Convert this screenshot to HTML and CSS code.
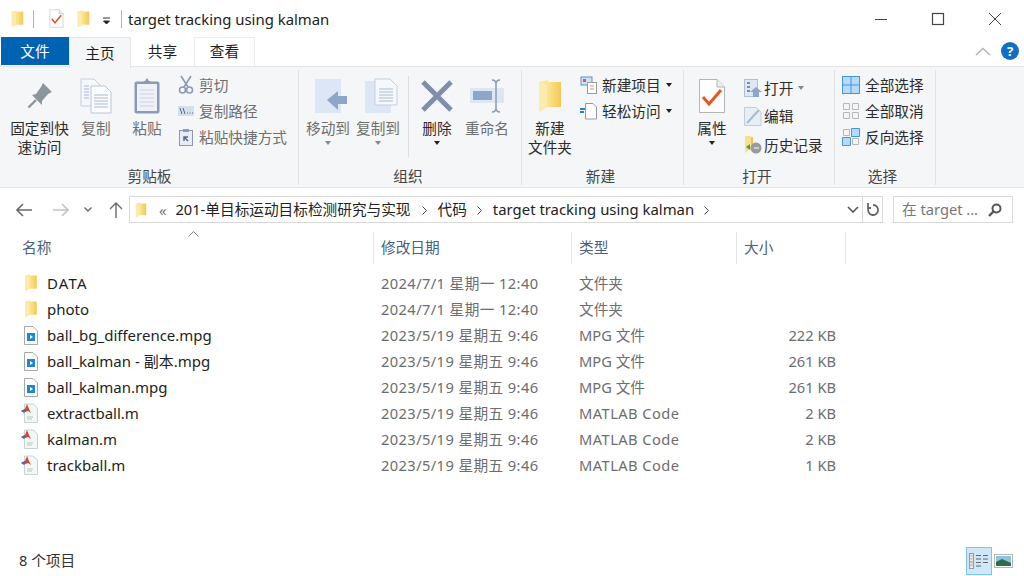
FILE: index.html
```html
<!DOCTYPE html>
<html lang="zh-CN">
<head>
    <meta charset="UTF-8">
    <title>target tracking using kalman</title>
    <link rel="stylesheet" href="styles.css">
</head>
<body>
    <!-- shared icons -->
    <svg class="defs" width="0" height="0">
        <defs>
            <linearGradient id="fold" x1="0" x2="1" y1="0" y2="0">
                <stop offset="0" stop-color="#fbe9a6"/>
                <stop offset="0.45" stop-color="#fbe28c"/>
                <stop offset="1" stop-color="#f4c954"/>
            </linearGradient>
            <symbol id="folder" viewBox="0 0 24 34">
                <path d="M1 3 L10 1 L10 3 L23 3 L23 28 L9 28 L1 33 Z" fill="url(#fold)"/>
                <path d="M1 3 L9 6 L9 28 L1 33 Z" fill="#fcebac"/>
            </symbol>
            <symbol id="props" viewBox="0 0 28 36">
                <path d="M1.5 1.5 H19 L26.5 9 V34.5 H1.5 Z" fill="#fff" stroke="#b4b4b4"/>
                <path d="M19 1.5 V9 H26.5" fill="#eee" stroke="#b4b4b4"/>
                <path d="M5 19 L11 26 L23 12" fill="none" stroke="#e8551f" stroke-width="3"/>
            </symbol>
            <symbol id="pages" viewBox="0 0 32 36">
                <path d="M1 1 H14 L20 7 V28 H1 Z" fill="#f4f7fb" stroke="#c5d0e0"/>
                <path d="M11 8 H25 L31 14 V35 H11 Z" fill="#fbfcfe" stroke="#b9c6da"/>
                <path d="M14 17 H28 M14 20 H28 M14 23 H28 M14 26 H28 M14 29 H28 M4 8 H9 M4 11 H9 M4 14 H9 M4 17 H9 M4 20 H9" stroke="#a9bad3"/>
            </symbol>
            <symbol id="media" viewBox="0 0 14 19">
                <path d="M.5 .5 H9 L13.5 5 V18.5 H.5 Z" fill="#fdfdfd" stroke="#a9a9a9"/>
                <rect x="3" y="7" width="8" height="8" fill="#1f87d0"/>
                <path d="M6 9 L9 11 L6 13 Z" fill="#fff"/>
            </symbol>
            <symbol id="mfile" viewBox="0 0 18 20">
                <path d="M3.5 1 H12 L16.5 5 V19.5 H3.5 Z" fill="#f2f7f7" stroke="#c6d3d8"/>
                <path d="M6 14 H12 M6 16 H11" stroke="#b7c9b7"/>
                <path d="M0 8 L4 6 L6 1 L8 6 L10 10 L7 8 L4 9 Z" fill="#d8452a"/>
                <path d="M0 8 L4 6 L5 8 L3 10 Z" fill="#3d6fb5"/>
            </symbol>
        </defs>
    </svg>

    <header class="titlebar">
        <svg class="qa-folder" width="13" height="18"><use href="#folder"/></svg>
        <span class="qa-sep"></span>
        <svg class="qa-props" width="15" height="19"><use href="#props"/></svg>
        <svg class="qa-folder2" width="13" height="18"><use href="#folder"/></svg>
        <svg class="qa-caret" width="9" height="8" viewBox="0 0 9 8"><path d="M1 1 H8 M1.5 4 H7.5 L4.5 7 Z" stroke="#333" fill="#111"/></svg>
        <span class="qa-sep"></span>
        <span class="title">target tracking using kalman</span>
        <div class="win-btns">
            <svg width="14" height="14" viewBox="0 0 14 14"><path d="M1 7.5 H13" stroke="#444"/></svg>
            <svg width="14" height="14" viewBox="0 0 14 14"><rect x="1.5" y="1.5" width="11" height="11" fill="none" stroke="#444" stroke-width="1.2"/></svg>
            <svg width="14" height="14" viewBox="0 0 14 14"><path d="M1 1 L13 13 M13 1 L1 13" stroke="#444" stroke-width="1"/></svg>
        </div>
    </header>

    <nav class="tabs">
        <div class="tab tab-file">文件</div>
        <div class="tab tab-active">主页</div>
        <div class="tab tab-plain">共享</div>
        <div class="tab tab-view">查看</div>
        <div class="tabs-right">
            <svg width="16" height="9" viewBox="0 0 16 9"><path d="M1 8 L8 1.5 L15 8" fill="none" stroke="#b5b5b5" stroke-width="1.5"/></svg>
            <span class="help">?</span>
        </div>
    </nav>

    <section class="ribbon">
        <div class="group group-clip">
            <div class="group-body">
                <div class="big w59">
                    <svg class="big-icon" width="38" height="38" viewBox="0 0 38 38"><path d="M22 6 L31 15 L27 17 L21 24 L21 28 L11 18 L15 17 L20 10 Z" fill="#8b959c"/><path d="M15 23 L7.500 30.500" stroke="#8b959c" stroke-width="2.400"/></svg>
                    <span>固定到快<br>速访问</span>
                </div>
                <div class="big w54 dim">
                    <svg class="big-icon" width="32" height="36"><use href="#pages"/></svg>
                    <span>复制</span>
                </div>
                <div class="big w48 dim">
                    <svg class="big-icon" width="28" height="38" viewBox="0 0 28 38"><rect x="1.5" y="4.5" width="25" height="32" rx="2" fill="#8b9bb6"/><rect x="4" y="7" width="20" height="27" fill="#eef2f8"/><path d="M7 13 H21 M7 17 H21 M7 21 H21 M7 25 H21 M7 29 H21" stroke="#cad4e4"/><path d="M9 7 L11 4 H12 L14 1 L16 4 H17 L19 7 Z" fill="#8b9bb6"/></svg>
                    <span>粘贴</span>
                </div>
                <div class="small-list clip-list dim">
                    <div class="small">
                        <svg width="16" height="20" viewBox="0 0 16 20"><path d="M3 1 L10 12 M13 1 L6 12" stroke="#8a9ab5" stroke-width="1.6"/><circle cx="4.5" cy="15" r="3" fill="none" stroke="#8a9ab5" stroke-width="1.6"/><circle cx="11.5" cy="15" r="3" fill="none" stroke="#8a9ab5" stroke-width="1.6"/></svg>
                        <span>剪切</span>
                    </div>
                    <div class="small">
                        <svg width="16" height="12" viewBox="0 0 16 12"><rect width="16" height="10" y="1" fill="#d5dfee"/><path d="M2 3 L4 9 M5 3 L7 9 M9 8 H10 M11.500 8 H12.500 M14 8 H15" stroke="#56688a"/></svg>
                        <span>复制路径</span>
                    </div>
                    <div class="small">
                        <svg width="14" height="18" viewBox="0 0 14 18"><rect x=".5" y="2.500" width="13" height="15" fill="#e6ecf5" stroke="#8a9ab5"/><rect x="4" y="1" width="6" height="3" fill="#8a9ab5"/><path d="M5 13 V9 H9 M5 9 L9 13" stroke="#56688a" stroke-width="1.500" fill="none"/></svg>
                        <span>粘贴快捷方式</span>
                    </div>
                </div>
            </div>
            <div class="group-name">剪贴板</div>
        </div>

        <div class="group group-org">
            <div class="group-body">
                <div class="big w52 dim">
                    <svg class="big-icon nudge" width="34" height="36" viewBox="0 0 34 36"><rect x="1" y="1" width="26" height="34" fill="#dce6f4"/><path d="M13 22 L24 13 V18 H33 V26 H24 V32 Z" fill="#8ea6c8"/></svg>
                    <span>移动到</span><i class="caret"></i>
                </div>
                <div class="big w48 dim">
                    <svg class="big-icon nudge" width="34" height="36" viewBox="0 0 34 36"><rect x="1" y="3" width="26" height="32" fill="#dce6f4"/><path d="M11 1 H26 L33 8 V27 H11 Z" fill="#f5f8fc" stroke="#c3cfe0"/><path d="M15 11 H29 M15 14 H29 M15 17 H29 M15 20 H29 M15 23 H29" stroke="#a9bad3"/></svg>
                    <span>复制到</span><i class="caret"></i>
                </div>
                <span class="vsep"></span>
                <div class="big w56">
                    <svg class="big-icon" width="34" height="36" viewBox="0 0 34 36"><path d="M3 4 L31 32 M31 4 L3 32" stroke="#7f8fab" stroke-width="5"/></svg>
                    <span>删除</span><i class="caret dark"></i>
                </div>
                <div class="big w44 dim">
                    <svg class="big-icon" width="36" height="36" viewBox="0 0 36 36"><rect x="1" y="10" width="34" height="15" fill="#dce6f4"/><rect x="4" y="13" width="19" height="9" fill="#8ea6c8"/><path d="M23 2 Q27 2 27 6 V30 Q27 34 31 34 M31 2 Q27 2 27 6 M27 30 Q27 34 23 34" fill="none" stroke="#8a9ab5" stroke-width="1.500"/></svg>
                    <span>重命名</span>
                </div>
            </div>
            <div class="group-name">组织</div>
        </div>

        <div class="group group-new">
            <div class="group-body">
                <div class="big w56">
                    <svg class="big-icon" width="24" height="36"><use href="#folder"/></svg>
                    <span>新建<br>文件夹</span>
                </div>
                <div class="small-list new-list">
                    <div class="small">
                        <svg width="18" height="18" viewBox="0 0 18 18"><rect x="1" y="1" width="11" height="8" fill="#cfe3f7" stroke="#5f8fc2"/><path d="M3 3 H6 V6 H3 Z" fill="#e8553a"/><rect x="7.500" y="6.500" width="9" height="11" fill="#fff" stroke="#9a9a9a"/><path d="M10 10 H14 M10 13 H14" stroke="#e38a80"/></svg>
                        <span>新建项目</span><i class="caret dark inline"></i>
                    </div>
                    <div class="small">
                        <svg width="18" height="18" viewBox="0 0 18 18"><path d="M5.500 1.500 H13 L16.500 5 V17 H5.500 Z" fill="#fff" stroke="#9a9a9a"/><path d="M0 7 H5 M0 10 H4" stroke="#2f7fc8" stroke-width="2"/></svg>
                        <span>轻松访问</span><i class="caret dark inline"></i>
                    </div>
                </div>
            </div>
            <div class="group-name">新建</div>
        </div>

        <div class="group group-open">
            <div class="group-body">
                <div class="big w56">
                    <svg class="big-icon" width="28" height="36"><use href="#props"/></svg>
                    <span>属性</span><i class="caret dark"></i>
                </div>
                <div class="small-list open-list">
                    <div class="small dim">
                        <svg width="18" height="19" viewBox="0 0 18 19"><rect x=".5" y=".5" width="13" height="17" fill="#dfe7f2" stroke="#b0bed2"/><path d="M3 4 H6 M3 8 H6 M3 12 H6" stroke="#7a8ca8" stroke-width="2"/><path d="M6 13 L12 8 L18 13 H15 V18 H9 V13 Z" fill="#8ea6c8"/></svg>
                        <span>打开</span><i class="caret inline"></i>
                    </div>
                    <div class="small dim">
                        <svg width="18" height="19" viewBox="0 0 18 19"><path d="M.5 .5 H12 L17 5 V18.500 H.5 Z" fill="#e8eef6" stroke="#c0cddf"/><path d="M3 16 L15 3" stroke="#a9bad3" stroke-width="2"/></svg>
                        <span>编辑</span>
                    </div>
                    <div class="small">
                        <svg width="18" height="19" viewBox="0 0 18 19"><path d="M1 1 H7 V14 L1 18 Z" fill="#fbe08a"/><path d="M7 2 H9 V12 H7 Z" fill="#f2c552"/><circle cx="12" cy="13" r="5.500" fill="#9a9a9a"/><path d="M2 12 L6 9 V15 Z" fill="#45a345"/><path d="M10 13 H15" stroke="#fff"/></svg>
                        <span>历史记录</span>
                    </div>
                </div>
            </div>
            <div class="group-name">打开</div>
        </div>

        <div class="group group-sel">
            <div class="group-body">
                <div class="small-list sel-list">
                    <div class="small">
                        <svg width="18" height="18" viewBox="0 0 18 18"><rect width="18" height="18" fill="#3f97e0"/><path d="M1 1 H8.500 V8.500 H1 Z M9.500 1 H17 V8.500 H9.500 Z M1 9.500 H8.500 V17 H1 Z M9.500 9.500 H17 V17 H9.500 Z" fill="#b5dbf9"/></svg>
                        <span>全部选择</span>
                    </div>
                    <div class="small">
                        <svg width="18" height="18" viewBox="0 0 18 18"><path d="M1.500 1.500 H7.500 V7.500 H1.500 Z M10.500 1.500 H16.500 V7.500 H10.500 Z M1.500 10.500 H7.500 V16.500 H1.500 Z M10.500 10.500 H16.500 V16.500 H10.500 Z" fill="#f5f5f5" stroke="#b8b8b8"/></svg>
                        <span>全部取消</span>
                    </div>
                    <div class="small">
                        <svg width="18" height="18" viewBox="0 0 18 18"><path d="M1.500 1.500 H7.500 V7.500 H1.500 Z M10.500 10.500 H16.500 V16.500 H10.500 Z" fill="#f5f5f5" stroke="#b8b8b8"/><path d="M9.500 .5 H17.500 V8.500 H9.500 Z M.5 9.500 H8.500 V17.500 H.5 Z" fill="#b5dbf9" stroke="#3f97e0"/></svg>
                        <span>反向选择</span>
                    </div>
                </div>
            </div>
            <div class="group-name">选择</div>
        </div>
    </section>

    <div class="navbar">
        <svg class="nav-back" width="16" height="14" viewBox="0 0 16 14"><path d="M7 1 L1 7 L7 13 M1 7 H16" fill="none" stroke="#6a6a6a" stroke-width="1.600"/></svg>
        <svg class="nav-fwd" width="16" height="14" viewBox="0 0 16 14"><path d="M9 1 L15 7 L9 13 M15 7 H0" fill="none" stroke="#c4c4c4" stroke-width="1.600"/></svg>
        <svg class="nav-down" width="8" height="5" viewBox="0 0 8 5"><path d="M.5 .5 L4 4 L7.500 .5" fill="none" stroke="#6a6a6a" stroke-width="1.400"/></svg>
        <svg class="nav-up" width="14" height="16" viewBox="0 0 14 16"><path d="M1 7 L7 1 L13 7 M7 1 V16" fill="none" stroke="#6a6a6a" stroke-width="1.400"/></svg>
        <div class="address">
            <svg class="addr-folder" width="12" height="16"><use href="#folder"/></svg>
            <span class="quote">«</span>
            <span class="crumb crumb-first">201-单目标运动目标检测研究与实现</span>
            <svg class="gt" width="5" height="9" viewBox="0 0 5 9"><path d="M.5 .5 L4.500 4.500 L.5 8.500" fill="none" stroke="#444"/></svg>
            <span class="crumb">代码</span>
            <svg class="gt" width="5" height="9" viewBox="0 0 5 9"><path d="M.5 .5 L4.500 4.500 L.5 8.500" fill="none" stroke="#444"/></svg>
            <span class="crumb latin">target tracking using kalman</span>
            <svg class="gt" width="5" height="9" viewBox="0 0 5 9"><path d="M.5 .5 L4.500 4.500 L.5 8.500" fill="none" stroke="#444"/></svg>
            <svg class="addr-down" width="12" height="7" viewBox="0 0 12 7"><path d="M1 1 L6 6 L11 1" fill="none" stroke="#555" stroke-width="1.600"/></svg>
            <div class="addr-refresh">
                <svg width="14" height="15" viewBox="0 0 14 15"><path d="M7 3 A5 5 0 1 1 2.500 6 M2 1 V6 H5" fill="none" stroke="#666" stroke-width="1.800"/></svg>
            </div>
        </div>
        <div class="search">
            <span>在 target ...</span>
            <svg width="14" height="14" viewBox="0 0 14 14"><circle cx="8.500" cy="5.500" r="4" fill="none" stroke="#555" stroke-width="2"/><path d="M5.500 8.500 L1 13" stroke="#555" stroke-width="2.400"/></svg>
        </div>
    </div>

    <main class="files">
        <div class="head">
            <div class="hcell hname">名称<svg class="sort" width="11" height="6" viewBox="0 0 11 6"><path d="M.5 5.500 L5.500 .5 L10.500 5.500" fill="none" stroke="#888"/></svg></div>
            <div class="hcell">修改日期</div>
            <div class="hcell">类型</div>
            <div class="hcell">大小</div>
        </div>
        <div class="row">
            <div class="name"><svg class="ico" width="14" height="18"><use href="#folder"/></svg><span class="caps">DATA</span></div>
            <div class="cell date">2024/7/1 星期一 12:40</div><div class="cell">文件夹</div><div class="cell size"></div>
        </div>
        <div class="row">
            <div class="name"><svg class="ico" width="14" height="18"><use href="#folder"/></svg>photo</div>
            <div class="cell date">2024/7/1 星期一 12:40</div><div class="cell">文件夹</div><div class="cell size"></div>
        </div>
        <div class="row">
            <div class="name"><svg class="ico" width="14" height="19"><use href="#media"/></svg>ball_bg_difference.mpg</div>
            <div class="cell date">2023/5/19 星期五 9:46</div><div class="cell">MPG 文件</div><div class="cell size">222 KB</div>
        </div>
        <div class="row">
            <div class="name"><svg class="ico" width="14" height="19"><use href="#media"/></svg>ball_kalman - 副本.mpg</div>
            <div class="cell date">2023/5/19 星期五 9:46</div><div class="cell">MPG 文件</div><div class="cell size">261 KB</div>
        </div>
        <div class="row">
            <div class="name"><svg class="ico" width="14" height="19"><use href="#media"/></svg>ball_kalman.mpg</div>
            <div class="cell date">2023/5/19 星期五 9:46</div><div class="cell">MPG 文件</div><div class="cell size">261 KB</div>
        </div>
        <div class="row">
            <div class="name"><svg class="ico" width="18" height="20"><use href="#mfile"/></svg>extractball.m</div>
            <div class="cell date">2023/5/19 星期五 9:46</div><div class="cell code">MATLAB Code</div><div class="cell size">2 KB</div>
        </div>
        <div class="row">
            <div class="name"><svg class="ico" width="18" height="20"><use href="#mfile"/></svg>kalman.m</div>
            <div class="cell date">2023/5/19 星期五 9:46</div><div class="cell code">MATLAB Code</div><div class="cell size">2 KB</div>
        </div>
        <div class="row">
            <div class="name"><svg class="ico" width="18" height="20"><use href="#mfile"/></svg>trackball.m</div>
            <div class="cell date">2023/5/19 星期五 9:46</div><div class="cell code">MATLAB Code</div><div class="cell size">1 KB</div>
        </div>
    </main>

    <footer class="status">
        <span class="count">8 个项目</span>
        <div class="view-btn view-on">
            <svg width="20" height="16" viewBox="0 0 20 16"><rect x=".5" y=".5" width="4" height="15" fill="#e8e8e8" stroke="#999"/><path d="M1.500 3 H3.500" stroke="#b99"/><path d="M1.500 6 H3.500" stroke="#d8a040"/><path d="M1.500 9 H3.500" stroke="#d85040"/><path d="M1.500 12 H3.500" stroke="#999"/><path d="M7 2.500 H12 M14 2.500 H19 M7 6 H12 M14 6 H19 M7 9.500 H12 M14 9.500 H19 M7 13 H12" stroke="#666"/></svg>
        </div>
        <svg class="thumb" width="19" height="14" viewBox="0 0 19 14"><rect x=".5" y=".5" width="18" height="13" fill="#fff" stroke="#b5b5b5"/><rect x="2" y="2" width="15" height="10" fill="#8fc3dc"/><path d="M2 12 V8 L8 5 L17 9 V12 Z" fill="#2f6b4f"/></svg>
    </footer>
</body>
</html>
```

FILE: styles.css
```css
* {
    box-sizing: border-box;
}

html, body {
    height: 100%;
}

body {
    margin: 0;
    display: flex;
    flex-direction: column;
    overflow: hidden;
    background-color: #fff;
    color: #1e1e1e;
    font-family: "Noto Sans", "Noto Sans CJK SC", sans-serif;
    font-size: 14.67px;
    line-height: 20px;
}

.defs {
    position: absolute;
}

svg {
    display: block;
    flex: none;
}

/* title bar */
.titlebar {
    height: 36px;
    display: flex;
    align-items: center;
    padding: 1px 0 0 11px;
    flex: none;
}

.qa-sep {
    width: 1px;
    height: 18px;
    background-color: #b5b5b5;
    margin: 0 6px 0 9px;
}

.qa-props {
    margin-left: 9px;
}

.qa-folder2 {
    margin-left: 13px;
}

.qa-caret {
    margin: 5px 1px 0 12px;
}

.title {
    color: #222;
    font-size: 14.9px;
}

.win-btns {
    margin-left: auto;
    display: flex;
    gap: 43px;
    padding-right: 22px;
}

/* tabs */
.tabs {
    height: 31px;
    display: flex;
    flex: none;
    padding-left: 1px;
    border-bottom: 1px solid #e4e4e4;
}

.tab {
    height: 30px;
    display: flex;
    align-items: center;
    justify-content: center;
    font-size: 14.67px;
}

.tab-file {
    width: 68px;
    height: 28px;
    margin-top: 1px;
    background-color: #0063b1;
    color: #fff;
}

.tab-active {
    width: 62px;
    height: 31px;
    margin-top: 1px;
    background-color: #f5f6f7;
    border: 1px solid #e4e4e4;
    border-bottom: none;
    position: relative;
    z-index: 1;
}

.tab-plain {
    width: 63px;
}

.tab-view {
    width: 61px;
    height: 29px;
    margin-top: 1px;
    padding-bottom: 3px;
    border: 1px solid #ececec;
    border-bottom: none;
}

.tabs-right {
    margin-left: auto;
    display: flex;
    align-items: center;
    gap: 10px;
    padding-right: 5px;
}

.help {
    width: 18px;
    height: 18px;
    border-radius: 50%;
    background-color: #0f6fc6;
    color: #fff;
    font-size: 13px;
    font-weight: bold;
    line-height: 18px;
    text-align: center;
}

/* ribbon */
.ribbon {
    height: 121px;
    flex: none;
    display: flex;
    padding: 3px 0 0 3px;
    background-color: #f5f6f7;
    border-bottom: 1px solid #e4e4e4;
}

.group {
    height: 115px;
    display: flex;
    flex-direction: column;
    border-right: 1px solid #e2e3e4;
}

.group-clip { width: 296px; padding-left: 7px; }
.group-org { width: 223px; padding-left: 3px; }
.group-new { width: 162px; }
.group-open { width: 151px; }
.group-sel { width: 101px; padding-left: 7px; }

.group-body {
    height: 96px;
    flex: none;
    display: flex;
}

.group-name {
    height: 19px;
    padding-right: 4px;
    text-align: center;
    color: #444;
    font-size: 14.67px;
}

.group-clip .group-name { margin-left: -7px; padding-right: 2px; }
.group-org .group-name { margin-left: -3px; }
.group-sel .group-name { margin-left: -7px; padding-right: 5px; }

.big {
    display: flex;
    flex-direction: column;
    align-items: center;
    text-align: center;
    padding-top: 7px;
    line-height: 19px;
    color: #2b2b2b;
}

.big-icon {
    height: 38px;
    margin-bottom: 4px;
}

.big-icon.nudge {
    margin-left: 6px;
}

.w44 { width: 44px; }
.w48 { width: 48px; }
.w52 { width: 52px; }
.w54 { width: 54px; }
.w56 { width: 56px; }
.w59 { width: 59px; }

.dim,
.dim .small {
    color: #6f6f6f;
}

.caret {
    display: block;
    width: 0;
    height: 0;
    margin-top: 3px;
    border-left: 3.5px solid transparent;
    border-right: 3.5px solid transparent;
    border-top: 4px solid #888;
}

.caret.dark {
    border-top-color: #222;
}

.caret.inline {
    margin: 0 0 0 5px;
}

.vsep {
    width: 1px;
    height: 81px;
    margin: 6px 0 0 6px;
    background-color: #dcdde0;
}

.small-list {
    display: flex;
    flex-direction: column;
    padding-top: 2px;
}

.small {
    height: 26px;
    display: flex;
    align-items: center;
    color: #2b2b2b;
}

.small > svg {
    margin-right: 4px;
}

.clip-list { margin-left: 7px; }
.clip-list .small > svg { margin-right: 5px; width: 16px; }
.new-list { margin-left: 2px; }
.open-list { margin-left: 4px; padding-top: 4px; }
.open-list .small { height: 28.3px; }
.open-list .small > svg { margin-right: 2px; }
.sel-list .small > svg { margin-right: 5px; }

/* address row */
.navbar {
    height: 44px;
    flex: none;
    display: flex;
    align-items: center;
    padding: 0 11px 1px 16px;
}

.nav-fwd { margin-left: 21px; }
.nav-down { margin-left: 15px; }
.nav-up { margin-left: 17px; }

.address {
    width: 754px;
    height: 27px;
    margin-left: 6px;
    display: flex;
    align-items: center;
    border: 1px solid #d9d9d9;
    padding-left: 5px;
    color: #222;
}

.quote {
    margin-left: 12px;
    color: #777;
}

.crumb {
    margin: -2px 0 0 11px;
}

.crumb-first {
    margin-left: 9px;
}

.crumb.latin {
    font-size: 14.9px;
}

.gt {
    margin-left: 10px;
    margin-top: 1px;
}

.crumb-first + .gt {
    margin-left: 11px;
}

.addr-down {
    margin-left: auto;
    margin-right: 3px;
}

.addr-refresh {
    width: 20px;
    height: 25px;
    display: flex;
    align-items: center;
    justify-content: center;
    border-left: 1px solid #d9d9d9;
}

.search {
    width: 120px;
    height: 27px;
    margin-left: 10px;
    display: flex;
    align-items: center;
    justify-content: space-between;
    border: 1px solid #d9d9d9;
    padding: 0 10px 0 8px;
    color: #777;
}

.search span {
    margin-top: -2px;
}

/* file list */
.files {
    flex: 1;
}

.head {
    height: 32px;
    display: grid;
    grid-template-columns: 374px 198px 165px 109px;
    margin-bottom: 6px;
}

.hcell {
    padding: 0 0 2px 7px;
    display: flex;
    align-items: center;
    border-right: 1px solid #e5e5e5;
    color: #4c607a;
    position: relative;
}

.hname {
    padding-left: 22px;
}

.sort {
    position: absolute;
    left: 188px;
    top: -1px;
}

.row {
    height: 26px;
    display: grid;
    grid-template-columns: 374px 198px 165px 99px;
    align-items: center;
}

.name {
    display: flex;
    align-items: center;
    padding-left: 24px;
    color: #1e1e1e;
    font-size: 15px;
}

.caps {
    letter-spacing: 1.2px;
}

.ico {
    width: 14px;
    margin-right: 9px;
}

.name svg[width="18"] {
    width: 18px;
    margin-left: -3px;
    margin-right: 8px;
}

.cell {
    padding-left: 7px;
    color: #6d6d6d;
}

.date {
    letter-spacing: 0.4px;
}

.code {
    letter-spacing: 0.45px;
}

.size {
    text-align: right;
}

/* status bar */
.status {
    height: 30px;
    flex: none;
    display: flex;
    align-items: center;
    padding: 0 11px 0 19px;
}

.count {
    color: #333;
    margin-right: auto;
    margin-top: -2px;
}

.view-btn {
    width: 26px;
    height: 28px;
    display: flex;
    align-items: center;
    justify-content: center;
}

.view-on {
    background-color: #cde8fa;
    border: 1px solid #7fc3ee;
}

.thumb {
    margin-left: 2px;
}
```
